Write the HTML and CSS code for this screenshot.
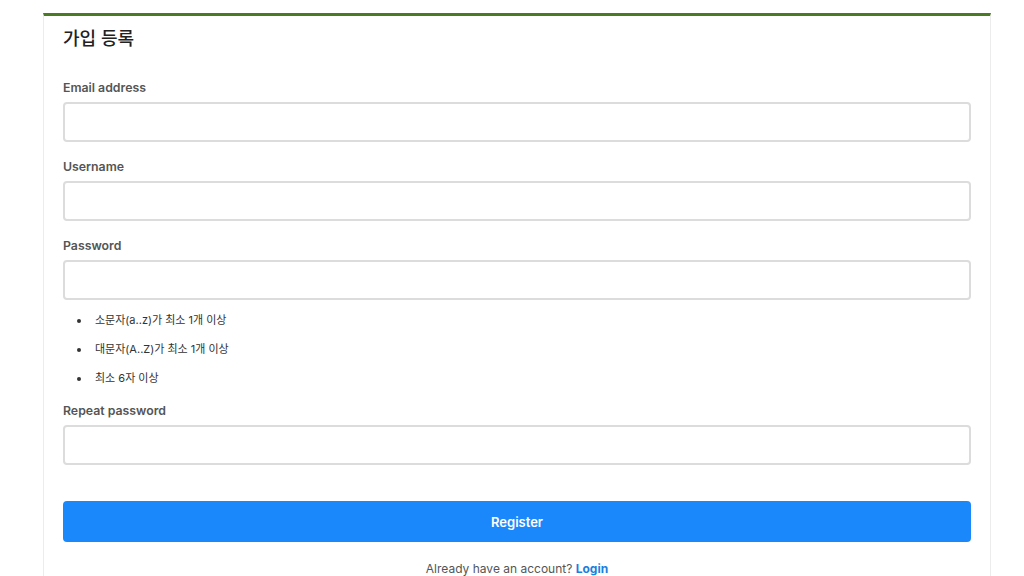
FILE: index.html
```html
<!DOCTYPE html>
<html lang="ko">
<head>
    <meta charset="UTF-8">
    <meta name="viewport" content="width=device-width, initial-scale=1.0">
    <title>가입 등록</title>
    <link rel="stylesheet" href="styles.css">
</head>
<body>
    <div class="card">
        <h2 class="title">가입 등록</h2>

        <form class="form">
            <div class="field">
                <label class="label" for="email">Email address</label>
                <input class="input" type="email" id="email">
            </div>
            <div class="field">
                <label class="label" for="username">Username</label>
                <input class="input" type="text" id="username">
            </div>
            <div class="field">
                <label class="label" for="password">Password</label>
                <input class="input" type="password" id="password">
                <ul class="rules">
                    <li>소문자(a..z)가 최소 1개 이상</li>
                    <li>대문자(A..Z)가 최소 1개 이상</li>
                    <li>최소 6자 이상</li>
                </ul>
            </div>
            <div class="field">
                <label class="label" for="repeat">Repeat password</label>
                <input class="input" type="password" id="repeat">
            </div>

            <button class="btn" type="button">Register</button>
        </form>

        <p class="login">Already have an account? <a href="#">Login</a></p>
    </div>
</body>
</html>
```

FILE: styles.css
```css
* {
    margin: 0px;
    padding: 0px;
    box-sizing: border-box;
}

body {
    font-family: Inter, "Noto Sans CJK KR", sans-serif;
    background-color: white;
    color: #333;
    padding-top: 13px;
}

.card {
    margin-left: 43px;
    width: 948px;
    border: 1px solid #ececec;
    border-top: 3px solid #4b7a25;
    padding: 11px 19px 40px 19px;
}

.title {
    font-size: 18px;
    font-weight: 500;
    color: #222;
    line-height: 24px;
}

.form {
    margin-top: 29px;
}

.field {
    margin-bottom: 17px;
}

.label {
    display: block;
    font-size: 12.3px;
    font-weight: 600;
    color: #555;
    line-height: 16px;
    margin-bottom: 6px;
}

.input {
    display: block;
    width: 100%;
    height: 40px;
    border: 2px solid #dcdcdc;
    border-radius: 4px;
    background: white;
}

/* Требования к паролю */
.rules {
    margin-top: 12px;
    padding-left: 28px;
    font-size: 11px;
    color: #333;
}

.rules li {
    line-height: 16px;
    margin-bottom: 13px;
    padding-left: 4px;
}

.rules li:last-child {
    margin-bottom: 12px;
}

.btn {
    display: block;
    width: 100%;
    height: 41px;
    margin-top: 36px;
    border: none;
    border-radius: 4px;
    background-color: #1a88fb;
    color: white;
    font-family: inherit;
    font-size: 13px;
    font-weight: 600;
}

.login {
    margin-top: 19px;
    text-align: center;
    font-size: 12px;
    color: #555;
}

.login a {
    color: #1a7fe0;
    font-weight: 700;
    text-decoration: none;
}
```
